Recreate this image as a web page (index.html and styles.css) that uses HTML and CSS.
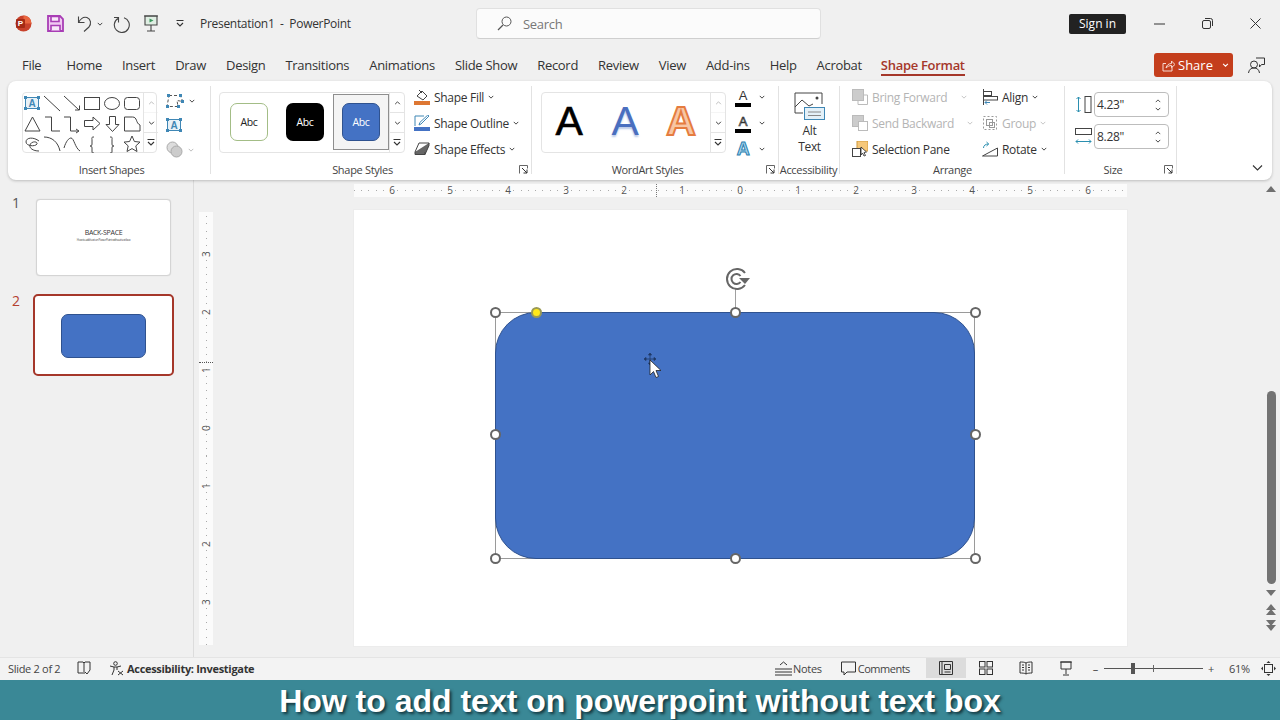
FILE: index.html
```html
<!DOCTYPE html>
<html>
<head>
  <meta charset="UTF-8">
  <title>Presentation1 - PowerPoint</title>
  <link rel="stylesheet" href="styles.css">
</head>
<body>
  <svg class="defs" width="0" height="0">
    <symbol id="chev" viewBox="0 0 8 5"><path d="M1 1l3 3 3-3" fill="none" stroke="#333" stroke-width="1.2"/></symbol>
    <symbol id="launch" viewBox="0 0 9 9"><path d="M.5 8.5v-8h8v3" fill="none" stroke="#666"/><path d="M3 3l5 5M8 4.500V8H4.500" fill="none" stroke="#333"/></symbol>
    <symbol id="up" viewBox="0 0 8 5"><path d="M1 4l3-3 3 3" fill="none" stroke="#333" stroke-width="1.1"/></symbol>
    <symbol id="more" viewBox="0 0 8 7"><path d="M.5 .5h7" stroke="#333"/><path d="M1 3l3 3 3-3" fill="none" stroke="#333" stroke-width="1.1"/></symbol>
  </svg>

  <div class="titlebar">
    <div class="qat">
      <svg class="logo" width="17" height="17" viewBox="0 0 17 17"><circle cx="8.500" cy="8.500" r="8" fill="#c8412a"/><path d="M8.500.5a8 8 0 0 1 8 8h-8z" fill="#e8663f"/><rect x="1" y="4" width="9" height="9" rx="1" fill="#a52a14"/><text x="2.800" y="11.300" class="logo-p">P</text></svg>
      <svg width="17" height="17" viewBox="0 0 17 17"><path d="M1 1h12l3 3v12H1z" fill="#f0c8f2" stroke="#a83db5" stroke-width="1.800"/><path d="M4 1.500h8v5H4zM4 15.500v-5h9v5" fill="#f8e6f9" stroke="#a83db5" stroke-width="1.600"/></svg>
      <svg class="ml12" width="16" height="17" viewBox="0 0 16 17"><path d="M2.500 1.500V7.500H8.500M2.500 7.500C5 3 8 1.500 11 2.500c4 1.500 4.500 6.500 2 9.500l-5 4.500" fill="none" stroke="#444" stroke-width="1.100"/></svg>
      <svg class="chev" width="6" height="4"><use href="#chev"/></svg>
      <svg class="ml10" width="18" height="18" viewBox="0 0 18 18"><path d="M5 3.500A7.500 7.500 0 1 0 11 2.800M5.500 7.500V2.500H1" fill="none" stroke="#444" stroke-width="1.100"/></svg>
      <svg class="ml12" width="16" height="17" viewBox="0 0 16 17"><path d="M2 1h12v9H2z" fill="#dfeee3" stroke="#444" stroke-width="1.100"/><path d="M8 10v6M4 16h8M1 1h14" fill="none" stroke="#444" stroke-width="1.100"/><path d="M6.500 3.500l4 2-4 2z" fill="#3c9a5f"/></svg>
      <svg class="ml17" width="8" height="7"><use href="#more"/></svg>
      <span class="doc-title">Presentation1&nbsp; -&nbsp; PowerPoint</span>
    </div>
    <div class="search">
      <svg width="15" height="15" viewBox="0 0 15 15"><circle cx="9.500" cy="5.500" r="4.500" fill="none" stroke="#555"/><path d="M6 9l-5 5" stroke="#555" stroke-width="1.200"/></svg>
      <span>Search</span>
    </div>
    <div class="title-right">
      <button class="signin">Sign in</button>
      <svg class="win-min" width="11" height="2" viewBox="0 0 11 2"><path d="M0 1h11" stroke="#333"/></svg>
      <svg class="win-btn" width="11" height="11" viewBox="0 0 11 11"><rect x=".5" y="2.500" width="8" height="8" rx="1.500" fill="none" stroke="#333"/><path d="M3 .5h5.500a2 2 0 0 1 2 2V8" fill="none" stroke="#333"/></svg>
      <svg class="win-btn" width="11" height="11" viewBox="0 0 11 11"><path d="M.5.5l10 10M10.500.5l-10 10" stroke="#333"/></svg>
    </div>
  </div>

  <div class="tabbar">
    <a class="tab tab-file">File</a>
    <a class="tab">Home</a>
    <a class="tab">Insert</a>
    <a class="tab">Draw</a>
    <a class="tab">Design</a>
    <a class="tab">Transitions</a>
    <a class="tab">Animations</a>
    <a class="tab">Slide Show</a>
    <a class="tab">Record</a>
    <a class="tab">Review</a>
    <a class="tab">View</a>
    <a class="tab">Add-ins</a>
    <a class="tab">Help</a>
    <a class="tab">Acrobat</a>
    <a class="tab tab-active">Shape Format</a>
    <button class="share">
      <svg width="13" height="13" viewBox="0 0 13 13"><path d="M10 7.500V12H1V4.500h3M4 9c.5-3 3-4.500 5.500-4.500V2L13 5.500 9.500 8.500V6.500C7.500 6.500 5.500 7.500 4 9z" fill="none" stroke="#f6d9d0"/></svg>
      <span>Share</span>
      <svg class="share-chev" width="7" height="4" viewBox="0 0 8 5"><path d="M1 1l3 3 3-3" fill="none" stroke="#fff" stroke-width="1.300"/></svg>
    </button>
    <svg class="coauthor" width="17" height="17" viewBox="0 0 17 17"><circle cx="6" cy="7.500" r="3.500" fill="none" stroke="#333"/><path d="M.5 16c.5-3.500 2.500-5 5.500-5s5 1.500 5.500 5M8 1h8.500v6.500h-3L11.500 10V7.500" fill="none" stroke="#333"/></svg>
  </div>

  <div class="ribbon">
    <section class="group group-insert">
      <div class="group-body">
        <div class="gallery shapes-gallery">
          <svg class="shapes" width="121" height="61" viewBox="22 92 121 61" fill="none" stroke="#444">
            <rect x="25.500" y="97.500" width="13" height="11" stroke="#3f87b5" fill="#e8f1f7"/>
            <path d="M44 96l16 15M64 96l15 14M75 110h4.500v-4.500"/>
            <rect x="84.500" y="97.500" width="15" height="12"/>
            <ellipse cx="112" cy="103.500" rx="7.500" ry="6"/>
            <rect x="124.500" y="97.500" width="15" height="12" rx="3"/>
            <path d="M25 131l7.500-14 7.500 14zM45 117h6.500v14H60M64 117h6.500v14h8M76 129l3 2-3 2M84.500 120.500h8.500v-3.500l7 6.500-7 6.500v-3.500h-8.500zM109.500 116.500h6v8h3.500l-6.500 7-6.500-7h3.500zM124.500 117h8c5 0 3 6 7.500 8v6h-15.500z"/>
            <path d="M39 141c-5-4-13-4-13 1 0 4 9 5 11 2 1-3-6-3-7 1-1 3 3 6 9 6M44 137c8 0 14 5 16 14M64 148c2-7 5-10 7-10 3 0 4 10 9 13M94 137c-3 0-2 1-2 3v4c0 2-1 2-2 2 1 0 2 0 2 2v3c0 2 0 2 2 2M110 137c3 0 2 1 2 3v4c0 2 1 2 2 2-1 0-2 0-2 2v3c0 2 0 2-2 2M132 136l2.400 5.500 5.600.6-4.200 3.800 1.200 5.600-5-2.900-5 2.900 1.200-5.600-4.200-3.800 5.600-.6z"/>
            <text x="28.500" y="107" class="shape-a">A</text>
            <g fill="#3f87b5" stroke="none"><rect x="24" y="96" width="3" height="3"/><rect x="37" y="96" width="3" height="3"/><rect x="24" y="107" width="3" height="3"/><rect x="37" y="107" width="3" height="3"/></g>
          </svg>
          <div class="gallery-scroll">
            <span class="off"><svg width="7" height="4"><use href="#up"/></svg></span>
            <span><svg width="7" height="4"><use href="#chev"/></svg></span>
            <span><svg width="8" height="7"><use href="#more"/></svg></span>
          </div>
        </div>
        <div class="icon-stack">
          <div class="stack-row">
            <svg width="18" height="14" viewBox="0 0 18 14"><path d="M3 1.500h11l3 6-6-1 1 6H1z" fill="none" stroke="#555" stroke-dasharray="3 2"/><g fill="#3f87b5"><rect x="1" y="0" width="3" height="3"/><rect x="13" y="0" width="3" height="3"/><rect x="0" y="11" width="3" height="3"/><rect x="11" y="11" width="3" height="3"/><rect x="15" y="6" width="3" height="3"/></g></svg>
            <svg width="6" height="4"><use href="#chev"/></svg>
          </div>
          <div class="stack-row">
            <svg width="16" height="14" viewBox="0 0 16 14"><rect x="1.500" y="1.500" width="13" height="11" fill="#e8f1f7" stroke="#3f87b5"/><text x="4.500" y="11" class="shape-a">A</text><g fill="#3f87b5"><rect x="0" y="0" width="3" height="3"/><rect x="13" y="0" width="3" height="3"/><rect x="0" y="11" width="3" height="3"/><rect x="13" y="11" width="3" height="3"/></g></svg>
          </div>
          <div class="stack-row dim">
            <svg width="17" height="17" viewBox="0 0 17 17"><circle cx="6.500" cy="6.500" r="5.500" fill="#ddd" stroke="#aaa"/><circle cx="10.500" cy="10.500" r="5.500" fill="#ccc" stroke="#aaa"/></svg>
            <svg width="6" height="4"><use href="#chev"/></svg>
          </div>
        </div>
      </div>
      <div class="group-label"><span></span><span>Insert Shapes</span><span></span></div>
    </section>

    <section class="group group-styles">
      <div class="group-body">
        <div class="gallery styles-gallery">
          <div class="style-cell"><div class="abc abc-outline">Abc</div></div>
          <div class="style-cell"><div class="abc abc-black">Abc</div></div>
          <div class="style-cell style-cell-on"><div class="abc abc-blue">Abc</div></div>
          <div class="gallery-scroll">
            <span><svg width="7" height="4"><use href="#up"/></svg></span>
            <span><svg width="7" height="4"><use href="#chev"/></svg></span>
            <span><svg width="8" height="7"><use href="#more"/></svg></span>
          </div>
        </div>
        <div class="cmds">
          <div class="cmd">
            <svg width="16" height="16" viewBox="0 0 16 16"><path d="M3 7l5-5 5 5-4 4z" fill="none" stroke="#444"/><path d="M5 1l3 3" stroke="#444"/><rect y="12" width="16" height="4" fill="#dd7733"/></svg>
            <span>Shape Fill</span><svg width="6" height="4"><use href="#chev"/></svg>
          </div>
          <div class="cmd">
            <svg width="16" height="16" viewBox="0 0 16 16"><path d="M1 1h9M1 1v10M15 1l-8 8-2 1 .8-2.500 8-7.500z" fill="none" stroke="#3f87b5"/><rect y="12" width="16" height="4" fill="#4472c4"/></svg>
            <span>Shape Outline</span><svg width="6" height="4"><use href="#chev"/></svg>
          </div>
          <div class="cmd">
            <svg width="16" height="14" viewBox="0 0 16 14"><path d="M5 1h10l-4 9H1z" fill="#fff" stroke="#444"/><path d="M1 10v2.500h10l4-9V1M11 10v2.500" fill="#666" stroke="#444"/></svg>
            <span>Shape Effects</span><svg width="6" height="4"><use href="#chev"/></svg>
          </div>
        </div>
      </div>
      <div class="group-label"><span></span><span>Shape Styles</span><svg class="launch" width="9" height="9"><use href="#launch"/></svg></div>
    </section>

    <section class="group group-wordart">
      <div class="group-body">
        <div class="gallery wordart-gallery">
          <div class="art art-black">A</div>
          <div class="art art-blue">A</div>
          <div class="art art-orange">A</div>
          <div class="gallery-scroll">
            <span class="off"><svg width="7" height="4"><use href="#up"/></svg></span>
            <span><svg width="7" height="4"><use href="#chev"/></svg></span>
            <span><svg width="8" height="7"><use href="#more"/></svg></span>
          </div>
        </div>
        <div class="text-tools">
          <div class="text-tool"><span class="ta ta-fill">A</span><svg width="6" height="4"><use href="#chev"/></svg></div>
          <div class="text-tool"><span class="ta ta-line">A</span><svg width="6" height="4"><use href="#chev"/></svg></div>
          <div class="text-tool"><span class="ta ta-fx">A</span><svg width="6" height="4"><use href="#chev"/></svg></div>
        </div>
      </div>
      <div class="group-label"><span></span><span>WordArt Styles</span><svg class="launch" width="9" height="9"><use href="#launch"/></svg></div>
    </section>

    <section class="group group-alt">
      <div class="group-body alt-body">
        <svg width="31" height="28" viewBox="0 0 31 28"><path d="M9 21H1V1h27v11" fill="none" stroke="#444"/><path d="M1 15l7-7 7 6 4-2" fill="none" stroke="#444"/><circle cx="23" cy="6" r="1.500" fill="#444"/><rect x="10.500" y="15.500" width="20" height="12" fill="#e3f0f8" stroke="#3f87b5"/><path d="M14 20h13M14 23.500h13" stroke="#888"/></svg>
        <div class="alt-text">Alt<br>Text</div>
      </div>
      <div class="group-label"><span></span><span>Accessibility</span><span></span></div>
    </section>

    <section class="group group-arrange">
      <div class="group-body arrange-body">
        <div class="cmds arrange-col">
          <div class="cmd cmd-off">
            <svg width="16" height="16" viewBox="0 0 16 16"><rect x=".5" y=".5" width="11" height="11" fill="#ccc" stroke="#bbb"/><path d="M12 6h3.500v9.500H6V12" fill="none" stroke="#bbb"/></svg>
            <span class="arr-w1">Bring Forward</span><svg width="6" height="4"><use href="#chev"/></svg>
          </div>
          <div class="cmd cmd-off">
            <svg width="16" height="16" viewBox="0 0 16 16"><rect x=".5" y=".5" width="11" height="11" fill="#ccc" stroke="#bbb"/><rect x="6.500" y="6.500" width="9" height="9" fill="#fff" stroke="#bbb"/></svg>
            <span class="arr-w2">Send Backward</span><svg width="6" height="4"><use href="#chev"/></svg>
          </div>
          <div class="cmd">
            <svg width="16" height="16" viewBox="0 0 16 16"><rect x="5" y="0" width="11" height="10" fill="#f6c87a" stroke="#d09a3e"/><rect x=".5" y="7.500" width="8" height="8" fill="#fff" stroke="#444"/><path d="M9 6l5.500 5-2.500.5 1.500 3-1.500.5-1.500-3-1.500 2z" fill="#fff" stroke="#222" stroke-width=".8"/></svg>
            <span>Selection Pane</span>
          </div>
        </div>
        <div class="cmds">
          <div class="cmd">
            <svg width="16" height="16" viewBox="0 0 16 16"><path d="M1.500 0v16" stroke="#444"/><rect x="1.500" y="2.500" width="8" height="4" fill="none" stroke="#444"/><rect x="1.500" y="7.500" width="14" height="3.500" fill="none" stroke="#444"/><path d="M8 13.500H3M5 11.500l-2 2 2 2" fill="none" stroke="#3f87b5"/></svg>
            <span>Align</span><svg width="6" height="4"><use href="#chev"/></svg>
          </div>
          <div class="cmd cmd-off">
            <svg width="16" height="16" viewBox="0 0 16 16"><rect x="1.500" y="1.500" width="13" height="13" fill="none" stroke="#999" stroke-dasharray="2 2"/><rect x="4.500" y="4.500" width="6" height="6" fill="none" stroke="#999"/><rect x="7.500" y="7.500" width="5" height="5" fill="none" stroke="#999"/></svg>
            <span>Group</span><svg width="6" height="4"><use href="#chev"/></svg>
          </div>
          <div class="cmd">
            <svg width="16" height="16" viewBox="0 0 16 16"><path d="M.5 15L15.500 7v8z" fill="none" stroke="#444"/><path d="M1.500 7c0-2.500 2-4 5-4M4.500 1l2.200 2-2.200 2" fill="none" stroke="#2b8fb0"/></svg>
            <span>Rotate</span><svg width="6" height="4"><use href="#chev"/></svg>
          </div>
        </div>
      </div>
      <div class="group-label"><span></span><span>Arrange</span><span></span></div>
    </section>

    <section class="group group-size">
      <div class="group-body size-body">
        <div class="size-row">
          <svg width="17" height="17" viewBox="0 0 17 17"><rect x="10" y=".5" width="6" height="16" fill="none" stroke="#444"/><path d="M3.500 1v15M1.500 3l2-2 2 2M1.500 14l2 2 2-2" fill="none" stroke="#2b8fb0"/></svg>
          <div class="spin"><span>4.23"</span><div class="spin-arrows"><svg width="6" height="4"><use href="#up"/></svg><svg width="6" height="4"><use href="#chev"/></svg></div></div>
        </div>
        <div class="size-row">
          <svg width="17" height="17" viewBox="0 0 17 17"><rect x=".5" y=".5" width="16" height="6" fill="none" stroke="#444"/><path d="M1 13.500h15M3 11.500l-2 2 2 2M14 11.500l2 2-2 2" fill="none" stroke="#2b8fb0"/></svg>
          <div class="spin"><span>8.28"</span><div class="spin-arrows"><svg width="6" height="4"><use href="#up"/></svg><svg width="6" height="4"><use href="#chev"/></svg></div></div>
        </div>
      </div>
      <div class="group-label"><span></span><span>Size</span><svg class="launch" width="9" height="9"><use href="#launch"/></svg></div>
    </section>

    <div class="collapse"><svg width="11" height="6" viewBox="0 0 11 6"><path d="M1 .5l4.500 4.500L10 .5" fill="none" stroke="#333" stroke-width="1.100"/></svg></div>
  </div>

  <div class="work">
    <aside class="thumbs">
      <div class="thumb-row">
        <span class="thumb-num">1</span>
        <div class="thumb thumb-one">
          <div class="t-title">BACK-SPACE</div>
          <div class="t-sub">How to add text on PowerPoint without text box</div>
        </div>
      </div>
      <div class="thumb-row thumb-row-on">
        <span class="thumb-num">2</span>
        <div class="thumb thumb-two"><div class="t-shape"></div></div>
      </div>
    </aside>

    <main class="canvas">
      <div class="ruler-h">
        <span>6</span><span>5</span><span>4</span><span>3</span><span>2</span><span>1</span><span>0</span><span>1</span><span>2</span><span>3</span><span>4</span><span>5</span><span>6</span>
      </div>
      <div class="ruler-v">
        <span>3</span><span>2</span><span>1</span><span>0</span><span>1</span><span>2</span><span>3</span>
      </div>
      <div class="slide">
        <div class="sel-box"></div>
        <div class="shape"></div>
        <div class="rot-line"></div>
        <svg class="rot-icon" width="26" height="24" viewBox="0 0 26 24"><path d="M20 6A10 10 0 1 0 20 18" fill="none" stroke="#666" stroke-width="2"/><path d="M15.500 9A5 5 0 1 0 15.500 15" fill="none" stroke="#666" stroke-width="2"/><path d="M14 11h11l-5 6z" fill="#666"/></svg>
        <i class="handle h-tl"></i><i class="handle h-tc"></i><i class="handle h-tr"></i>
        <i class="handle h-ml"></i><i class="handle h-mr"></i>
        <i class="handle h-bl"></i><i class="handle h-bc"></i><i class="handle h-br"></i>
        <i class="handle h-adj"></i>
        <svg class="pointer" width="18" height="29" viewBox="0 0 18 29"><path d="M7 4V14M2 9H12M7 3l-1.500 2h3zM7 15l-1.500-2h3zM1 9l2-1.500v3zM13 9l-2-1.500v3z" stroke="#1f3864" fill="#1f3864" stroke-width=".8"/><path d="M7 10v15l3.500-3.500 2.500 6 2.500-1-2.500-6h5z" fill="#fff" stroke="#222" stroke-width=".8"/></svg>
      </div>
    </main>

    <div class="vscroll">
      <i class="tri-up"></i>
      <div class="vtrack"><div class="vthumb"></div></div>
      <i class="tri-down"></i>
      <div class="dbl"><i class="tri-up"></i><i class="tri-up tri-over"></i></div>
      <div class="dbl dbl-last"><i class="tri-down"></i><i class="tri-down tri-over"></i></div>
    </div>
  </div>

  <footer class="status">
    <span class="st-slide">Slide 2 of 2</span>
    <svg class="st-book" width="14" height="14" viewBox="0 0 14 14"><path d="M1 1h5l1 1 1-1h5v8M7 2v11M1 1v11h5M8 11l2 2 3-4" fill="none" stroke="#333"/></svg>
    <svg class="st-acc" width="15" height="15" viewBox="0 0 15 15"><circle cx="6.500" cy="2.500" r="1.800" fill="none" stroke="#333"/><path d="M1 5l4 1h3l4-1M5 6v3l-2 5M8 6v3M9 10l5 4M14 10l-5 4" fill="none" stroke="#333"/></svg>
    <strong class="st-inv">Accessibility: Investigate</strong>
    <div class="st-right">
      <svg width="17" height="15" viewBox="0 0 17 15"><path d="M5 4l3.500-3L12 4M0 8h17M0 11h17M0 14h17" fill="none" stroke="#333"/></svg>
      <span class="st-notes">Notes</span>
      <svg class="st-comm-ic" width="15" height="15" viewBox="0 0 15 15"><path d="M.5 1h14v10H6l-3 3v-3H.5z" fill="none" stroke="#333"/></svg>
      <span class="st-comm">Comments</span>
      <span class="view view-on"><svg width="14" height="14" viewBox="0 0 14 14"><path d="M.5.500h13v13H.5zM3 .5v13M5.500 3.500h6v5h-6zM5.500 11h6" fill="none" stroke="#333"/></svg></span>
      <span class="view"><svg width="14" height="14" viewBox="0 0 14 14"><g fill="none" stroke="#333"><rect x=".5" y=".5" width="5.500" height="5.500"/><rect x="8" y=".5" width="5.500" height="5.500"/><rect x=".5" y="8" width="5.500" height="5.500"/><rect x="8" y="8" width="5.500" height="5.500"/></g></svg></span>
      <span class="view"><svg width="14" height="14" viewBox="0 0 14 14"><path d="M7 2C5.500 1 3 1 1 1v11c2 0 4.500 0 6 1 1.500-1 4-1 6-1V1c-2 0-4.500 0-6 1zM7 2v11M3 4h2M3 6.500h2M3 9h2M9 4h2M9 6.500h2M9 9h2" fill="none" stroke="#333"/></svg></span>
      <span class="view"><svg width="14" height="15" viewBox="0 0 14 15"><path d="M2 1h10v7H2zM7 8v5M4 14h6M1 1h12" fill="none" stroke="#333"/></svg></span>
      <span class="zoom-minus">–</span>
      <div class="zoom-track"><i class="zoom-mid"></i><i class="zoom-thumb"></i></div>
      <span class="zoom-plus">+</span>
      <span class="zoom-pct">61%</span>
      <svg class="st-fit" width="15" height="15" viewBox="0 0 15 15"><rect x="3.500" y="3.500" width="8" height="8" fill="none" stroke="#333"/><path d="M7.500 0L5.500 2h4zM7.500 15l-2-2h4zM0 7.500l2-2v4zM15 7.500l-2-2v4z" fill="#333"/></svg>
    </div>
  </footer>

  <div class="caption">How to add text on powerpoint without text box</div>
</body>
</html>
```

FILE: styles.css
```css
* {
  box-sizing: border-box;
}

html, body {
  margin: 0;
  height: 100%;
}

body {
  width: 1280px;
  height: 720px;
  overflow: hidden;
  display: flex;
  flex-direction: column;
  background: #f0f0f0;
  color: #333;
  font-family: "Open Sans", "Noto Sans", sans-serif;
  font-size: 12px;
  letter-spacing: -.3px;
}

svg {
  display: block;
  flex: none;
}

.defs {
  position: absolute;
}

/* title bar */
.titlebar {
  height: 47px;
  flex: none;
  display: flex;
  align-items: center;
  position: relative;
}

.qat {
  width: 476px;
  flex: none;
  display: flex;
  align-items: center;
  padding-left: 15px;
}

.qat > svg:nth-child(2) {
  margin-left: 15px;
}

.logo-p {
  font: bold 8px "Liberation Sans", sans-serif;
  fill: #fff;
}

.ml10 { margin-left: 10px; }
.ml12 { margin-left: 12px; }
.ml17 { margin-left: 17px; }

.chev {
  margin-left: 5px;
}

.doc-title {
  margin-left: 16px;
  font-size: 12px;
  color: #333;
}

.search {
  width: 345px;
  height: 31px;
  background: #fbfbfb;
  border: 1px solid #e0e0e0;
  border-bottom-color: #cfcfcf;
  border-radius: 4px;
  display: flex;
  align-items: center;
  gap: 11px;
  padding-left: 20px;
  font-size: 13px;
  color: #777;
}

.title-right {
  margin-left: auto;
  display: flex;
  align-items: center;
  padding-right: 19px;
}

.signin {
  width: 57px;
  height: 20px;
  padding: 0;
  border: 0;
  border-radius: 2px;
  background: #222;
  color: #fff;
  font: 12px "Open Sans", sans-serif;
}

.win-min {
  margin-left: 28px;
}

.win-btn {
  margin-left: 37px;
}

/* tabs */
.tabbar {
  height: 34px;
  flex: none;
  display: flex;
  align-items: center;
  gap: 20px;
  padding-left: 22px;
  padding-top: 2px;
}

.tab {
  font-size: 13px;
  color: #333;
  white-space: nowrap;
}

.tab-file {
  margin-right: 5px;
}

.tab-active {
  color: #a5372a;
  font-weight: 600;
  position: relative;
  margin-left: -1px;
}

.tab-active::after {
  content: "";
  position: absolute;
  left: 0;
  right: 0;
  bottom: -2px;
  height: 2px;
  background: #a5372a;
}

.share {
  margin-left: auto;
  width: 79px;
  height: 24px;
  border: 0;
  border-radius: 3px;
  padding: 0 0 0 8px;
  background: #c43e1c;
  color: #fff;
  font: 13px "Open Sans", sans-serif;
  display: flex;
  align-items: center;
  gap: 3px;
}

.share-chev {
  margin-left: 6px;
}

.coauthor {
  margin-left: -5px;
  margin-right: 15px;
}

/* ribbon */
.ribbon {
  height: 99px;
  flex: none;
  width: 1264px;
  margin-left: 8px;
  background: #fff;
  border-radius: 8px;
  box-shadow: 0 1px 3px rgba(0, 0, 0, .22);
  display: flex;
  position: relative;
  z-index: 2;
  font-size: 12px;
}

.group {
  display: flex;
  flex-direction: column;
  padding-top: 3px;
  position: relative;
}

.group::after {
  content: "";
  position: absolute;
  right: 0;
  top: 5px;
  bottom: 6px;
  width: 1px;
  background: #e2e2e2;
}

.group-body {
  height: 78px;
  display: flex;
}

/* the label spans the whole group; --shift moves its text off centre */
.group-label {
  display: grid;
  grid-template-columns: 1fr auto 1fr;
  align-items: center;
  height: 15px;
  font-size: 11px;
  color: #444;
  margin-left: calc(0px - var(--pad));
  padding-right: var(--shift);
  padding-left: var(--lead, 0);
}

.launch {
  justify-self: end;
  margin-right: calc(4px - var(--shift));
}

.group-insert { width: 203px; padding-left: 14px; --pad: 14px; --shift: 0px; --lead: 4px; }
.group-styles { width: 321px; padding-left: 8px; --pad: 8px; --shift: 18px; }
.group-wordart { width: 247px; padding-left: 9px; --pad: 9px; --shift: 16px; }
.group-alt { width: 61px; --pad: 0px; --shift: 2px; }
.group-arrange { width: 225px; padding-left: 12px; --pad: 12px; --shift: 0px; }
.group-size { width: 112px; padding-left: 10px; --pad: 10px; --shift: 16px; }

.gallery {
  display: flex;
  margin-top: 8px;
  height: 61px;
  border: 1px solid #e4e4e4;
  border-radius: 4px;
  align-self: flex-start;
  position: relative;
}

.shapes-gallery {
  width: 135px;
}

.shapes {
  margin: -1px 0 0 -1px;
}

.shape-a {
  font: bold 10px "Liberation Sans", sans-serif;
  fill: #3f87b5;
  stroke: none;
}

.gallery-scroll {
  margin-left: auto;
  width: 15px;
  flex: none;
  align-self: stretch;
  display: flex;
  flex-direction: column;
  border-left: 1px solid #e4e4e4;
}

.gallery-scroll span {
  flex: 1;
  display: flex;
  align-items: center;
  justify-content: center;
  border-bottom: 1px solid #e4e4e4;
}

.gallery-scroll span:last-child {
  border-bottom: 0;
}

.gallery-scroll .off {
  opacity: .35;
}

.icon-stack {
  margin: 5px 0 0 9px;
  display: flex;
  flex-direction: column;
}

.stack-row {
  height: 26px;
  display: flex;
  align-items: center;
  gap: 5px;
}

.dim > svg:last-child {
  opacity: .35;
}

.styles-gallery {
  width: 186px;
  padding-left: 1px;
}

.style-cell {
  width: 56px;
  height: 56px;
  margin-top: 1px;
  display: flex;
  align-items: center;
  justify-content: center;
  border: 1px solid transparent;
}

.style-cell-on {
  border-color: #8e8e8e;
  background: #f4f4f4;
}

.abc {
  width: 38px;
  height: 38px;
  border-radius: 7px;
  display: flex;
  align-items: center;
  justify-content: center;
  font-size: 10.500px;
}

.abc-outline {
  background: #fff;
  border: 1.500px solid #a3bd86;
  color: #222;
}

.abc-black {
  background: #000;
  color: #fff;
}

.abc-blue {
  background: #4472c4;
  border: 1.500px solid #2f528f;
  color: #fff;
}

.cmds {
  margin: 0 0 0 9px;
  display: flex;
  flex-direction: column;
}

.cmd {
  height: 26px;
  display: flex;
  align-items: center;
  white-space: nowrap;
  color: #333;
  font-size: 12px;
}

.cmd > span {
  margin: 0 4px 0 4px;
}

.cmd-off {
  color: #b4b4b4;
}

.cmd-off > svg:last-child {
  opacity: .3;
}

.wordart-gallery {
  width: 185px;
  align-items: center;
}

.art {
  width: 56px;
  flex: none;
  text-align: center;
  font: 41px "Liberation Sans", sans-serif;
  margin-top: -2px;
  position: relative;
  left: -1px;
}

.art-black { color: #000; -webkit-text-stroke: .6px #000; }
.art-blue { color: #4a6fbf; text-shadow: 0 2px 2px #b9c8e6; }
.art-orange {
  color: #f8c6a4;
  -webkit-text-stroke: 2px #e57c3f;
  font-weight: bold;
}

.text-tools {
  margin-left: 9px;
  display: flex;
  flex-direction: column;
}

.text-tool {
  height: 26px;
  display: flex;
  align-items: center;
  gap: 8px;
}

.ta {
  width: 16px;
  font: 13px/15px "Liberation Sans", sans-serif;
  text-align: center;
}

.ta-fill { border-bottom: 4px solid #000; }
.ta-line { border-bottom: 4px solid #000; color: #fff; -webkit-text-stroke: .7px #333; }
.ta-fx { font-weight: bold; font-size: 18px; line-height: 18px; color: #a9d6ee; -webkit-text-stroke: 1px #2b7fb0; }

.alt-body {
  flex-direction: column;
  align-items: center;
  padding-top: 8px;
}

.alt-text {
  text-align: center;
  line-height: 16px;
  margin-top: 3px;
  font-size: 12px;
}

.arrange-col {
  margin: 0;
  width: 120px;
  flex: none;
}

.arrange-body .cmds + .cmds {
  margin-left: 10px;
}

.arr-w1 { width: 85px; flex: none; }
.arr-w2 { width: 91px; flex: none; }

.size-body {
  flex-direction: column;
  gap: 7px;
  padding-top: 8px;
}

.size-row {
  display: flex;
  align-items: center;
  gap: 2px;
}

.spin {
  width: 75px;
  height: 25px;
  border: 1px solid #bdbdbd;
  border-radius: 4px;
  display: flex;
  align-items: center;
  justify-content: space-between;
  padding: 0 7px 0 2px;
  font-size: 12px;
}

.spin-arrows {
  display: flex;
  flex-direction: column;
  gap: 4px;
}

.collapse {
  margin-left: auto;
  align-self: flex-end;
  padding: 0 9px 9px 0;
}

/* main area */
.work {
  flex: 1;
  min-height: 0;
  display: grid;
  grid-template-columns: 194px 1fr 18px;
}

.thumbs {
  border-right: 1px solid #dcdcdc;
  padding-top: 19px;
  display: flex;
  flex-direction: column;
  gap: 18px;
}

.thumb-row {
  display: flex;
  align-items: flex-start;
  padding-left: 12px;
}

.thumb-num {
  font-size: 14px;
  line-height: 18px;
  width: 24px;
  color: #555;
  flex: none;
  margin-top: -5px;
}

.thumb {
  background: #fff;
  display: flex;
  flex-direction: column;
  align-items: center;
  justify-content: center;
}

.thumb-one {
  width: 135px;
  height: 77px;
  border: 1px solid #d4d4d4;
  border-radius: 4px;
  box-shadow: 0 0 1px #ccc;
  padding-bottom: 4px;
}

.t-title {
  font-size: 7px;
  line-height: 10px;
  color: #333;
}

.t-sub {
  font-size: 3px;
  line-height: 5px;
  color: #444;
}

.thumb-row-on .thumb-num {
  color: #b4402e;
  width: 21px;
  margin-top: -2px;
}

.thumb-two {
  width: 141px;
  height: 82px;
  border: 2.500px solid #a5372a;
  border-radius: 5px;
}

.t-shape {
  width: 85px;
  height: 44px;
  background: #4472c4;
  border: 1px solid #2f528f;
  border-radius: 7px;
  margin: 1px 0 0 -1px;
}

.canvas {
  padding: 4px 0 0 5px;
  display: grid;
  grid-template-columns: 14px 773px;
  grid-template-rows: 13px 436px;
  column-gap: 141px;
  row-gap: 13px;
}

.ruler-h {
  grid-column: 2;
  grid-row: 1;
  display: flex;
  padding-left: 9px;
  font-size: 10px;
  line-height: 13px;
  color: #555;
  background-color: #fbfbfb;
  background-image: repeating-linear-gradient(90deg, #aaa 0 1px, transparent 1px 7.250px);
  background-size: 100% 1px;
  background-position: 0 6px;
  background-repeat: no-repeat;
  position: relative;
}

.ruler-h span {
  width: 58px;
  flex: none;
  text-align: center;
}

.ruler-v {
  grid-column: 1;
  grid-row: 1 / 3;
  margin-top: 28px;
  height: 433px;
  padding-top: 13px;
  display: flex;
  flex-direction: column;
  font-size: 10px;
  color: #555;
  background-color: #fbfbfb;
  background-image: repeating-linear-gradient(0deg, #aaa 0 1px, transparent 1px 7.250px);
  background-size: 1px 100%;
  background-position: 7px 0;
  background-repeat: no-repeat;
  position: relative;
}

.ruler-v span {
  height: 58px;
  text-align: center;
  writing-mode: vertical-rl;
  transform: rotate(180deg);
  line-height: 14px;
}

.ruler-v::after {
  content: "";
  position: absolute;
  left: 0;
  right: 0;
  top: 150px;
  border-top: 1px dotted #555;
}

.ruler-h::after {
  content: "";
  position: absolute;
  left: 302px;
  top: 0;
  bottom: 0;
  border-left: 1px dotted #777;
}

.slide {
  grid-column: 2;
  grid-row: 2;
  background: #fff;
  outline: 1px solid #ececec;
  position: relative;
}

.sel-box {
  position: absolute;
  left: 141px;
  top: 102px;
  width: 480px;
  height: 247px;
  border: 1px solid #9a9a9a;
}

.shape {
  position: absolute;
  left: 141px;
  top: 102px;
  width: 480px;
  height: 247px;
  background: #4472c4;
  border: 1px solid #2f528f;
  border-radius: 41px;
}

.rot-line {
  position: absolute;
  left: 381px;
  top: 79px;
  width: 1px;
  height: 24px;
  background: #a0a0a0;
}

.rot-icon {
  position: absolute;
  left: 371px;
  top: 57px;
}

.handle {
  position: absolute;
  width: 11px;
  height: 11px;
  margin: -5.500px 0 0 -5.500px;
  border-radius: 50%;
  background: #fff;
  border: 2px solid #666;
}

.h-tl { left: 141px; top: 102px; }
.h-tc { left: 381px; top: 102px; }
.h-tr { left: 621px; top: 102px; }
.h-ml { left: 141px; top: 224px; }
.h-mr { left: 621px; top: 224px; }
.h-bl { left: 141px; top: 348px; }
.h-bc { left: 381px; top: 348px; }
.h-br { left: 621px; top: 348px; }

.h-adj {
  left: 182px;
  top: 102px;
  background: #ffe81a;
  border-color: #9a9a55;
}

.pointer {
  position: absolute;
  left: 289px;
  top: 140px;
}

/* scrollbar */
.vscroll {
  padding: 6px 0 0 0;
  display: flex;
  flex-direction: column;
  align-items: center;
  width: 18px;
}

.tri-up,
.tri-down {
  display: block;
  width: 0;
  height: 0;
  border-left: 5px solid transparent;
  border-right: 5px solid transparent;
}

.tri-up { border-bottom: 6px solid #707070; }
.tri-down { border-top: 6px solid #707070; }

.vtrack {
  height: 398px;
  padding-top: 199px;
}

.vthumb {
  width: 9px;
  height: 193px;
  background: #737373;
  border-radius: 5px;
}

.dbl {
  margin-top: 8px;
  height: 12px;
  position: relative;
  width: 10px;
}

.dbl-last {
  margin-top: 4px;
}

.tri-over {
  position: absolute;
  left: 0;
  top: 5px;
}

/* status bar */
.status {
  height: 23px;
  flex: none;
  background: #f3f3f3;
  border-top: 1px solid #e4e4e4;
  display: flex;
  align-items: center;
  padding: 0 0 2px 8px;
  font-size: 11px;
  color: #444;
}

.st-slide {
  width: 69px;
  flex: none;
}

.st-acc {
  margin-left: 18px;
}

.st-inv {
  margin-left: 3px;
  font-size: 11px;
  font-weight: 700;
  color: #333;
}

.st-right {
  margin-left: auto;
  display: flex;
  align-items: center;
  height: 100%;
  padding-right: 4px;
}

.st-notes {
  margin-left: 1px;
}

.st-comm-ic {
  margin-left: 19px;
}

.st-comm {
  margin-left: 2px;
  width: 68px;
  letter-spacing: -.5px;
}

.view {
  width: 40px;
  height: 100%;
  display: flex;
  align-items: center;
  justify-content: center;
}

.view-on {
  background: #dcdcdc;
}

.zoom-minus {
  margin-left: 7px;
  font-size: 11px;
}

.zoom-track {
  width: 99px;
  height: 1px;
  margin: 0 5px 0 6px;
  background: #555;
  position: relative;
}

.zoom-mid {
  position: absolute;
  left: 49px;
  top: -3px;
  width: 1px;
  height: 7px;
  background: #666;
}

.zoom-thumb {
  position: absolute;
  left: 27px;
  top: -5px;
  width: 4px;
  height: 11px;
  background: #555;
}

.zoom-pct {
  margin-left: 15px;
  width: 30px;
}

.st-fit {
  margin-left: 2px;
}

.caption {
  height: 40px;
  flex: none;
  padding-top: 2px;
  background: #3a8896;
  color: #fff;
  font: bold 32px/38px "Liberation Sans", sans-serif;
  letter-spacing: 0;
  text-align: center;
  text-shadow: 2px 2px 3px #12343c;
  white-space: nowrap;
}
```
